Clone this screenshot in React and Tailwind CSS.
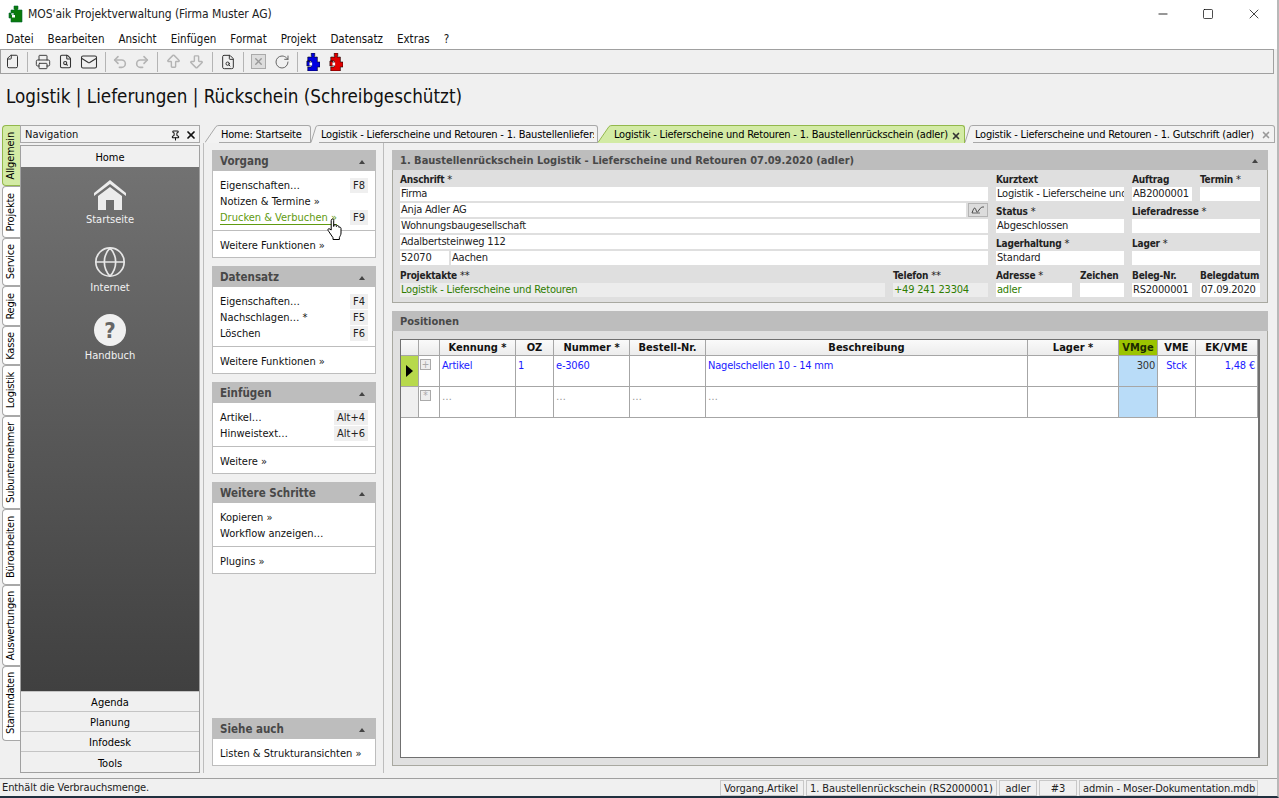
import { File, Printer, FileSearch, Mail, Undo2, Redo2, ArrowBigUp, ArrowBigDown, RotateCw, Globe, Pin, X, Minus, Square } from "lucide-react";

const font = "font-['DejaVu_Sans_Condensed','DejaVu_Sans',sans-serif]";

function Puzzle({ color, size = 14 }) {
  return (
    <svg width={size} height="18" viewBox="0 0 16 18" preserveAspectRatio="none">
      <path d="M6 0h4v3l-1 1h4v5h3v5h-3v4H2v-4h4v-1.5H4V13H1V8h3v1.5h2V8H2V4h5L6 3z" fill={color} stroke="#000" strokeWidth="0.6" />
      <rect x="4" y="9.5" width="3" height="3" fill="#fff" />
    </svg>
  );
}

function Sep() {
  return <div className="w-px h-[20px] bg-[#b4b4b4] mx-[7px]" />;
}

function Toolbar() {
  return (
    <div className="h-[25px] mr-[3px] border border-[#a0a0a0] bg-[#f0f0f0] flex items-center pl-[4px] text-[#333]">
      <File size={15} strokeWidth={1.6} className="-scale-x-100 w-[15px]" />
      <Sep />
      <Printer size={16} strokeWidth={1.4} />
      <FileSearch size={15} strokeWidth={1.7} className="ml-[7px]" />
      <Mail size={18} strokeWidth={1.4} className="ml-[7px]" />
      <Sep />
      <Undo2 size={16} strokeWidth={2.4} className="text-[#b4b4b4] -ml-[1px]" />
      <Redo2 size={16} strokeWidth={2.4} className="text-[#b4b4b4] ml-[6px]" />
      <Sep />
      <ArrowBigUp size={17} strokeWidth={2} className="text-[#b4b4b4]" />
      <ArrowBigDown size={17} strokeWidth={2} className="text-[#b4b4b4] ml-[6px]" />
      <Sep />
      <FileSearch size={16} strokeWidth={1.5} />
      <Sep />
      <div className="w-[15px] h-[15px] border border-[#aaa] bg-[#ddd] flex items-center justify-center">
        <X size={11} strokeWidth={3} className="text-[#999]" />
      </div>
      <RotateCw size={16} strokeWidth={1.5} className="ml-[8px] text-[#666]" />
      <Sep />
      <div className="ml-[1px]"><Puzzle color="#0000e0" /></div>
      <div className="ml-[9px]"><Puzzle color="#e00000" /></div>
    </div>
  );
}

const sideTabs = [
  ["Allgemein", 61],
  ["Projekte", 52],
  ["Service", 48],
  ["Regie", 40],
  ["Kasse", 39],
  ["Logistik", 51],
  ["Subunternehmer", 93],
  ["Büroarbeiten", 76],
  ["Auswertungen", 81],
  ["Stammdaten", 75],
];

function SideTabs() {
  return (
    <div className="w-[20px] pl-[2px] flex flex-col">
      {sideTabs.map(([name, h], i) => (
        <div
          key={name}
          style={{ height: h }}
          className={
            "border border-r-0 rounded-l-[4px] flex items-center justify-center text-[11px] tracking-[-0.2px] text-black " +
            (i === 0 ? "bg-[#d3eba5] border-[#93b84c]" : "bg-white border-[#a8a8a8]")
          }
        >
          <span className="[writing-mode:vertical-rl] rotate-180 whitespace-nowrap">{name}</span>
        </div>
      ))}
    </div>
  );
}

function NavBtn({ children }) {
  return <div className="h-[20px] pt-[4px] border-b border-[#c4c4c4] last:border-b-0 bg-[#f0f0f0] flex items-center justify-center text-[11px] text-black">{children}</div>;
}

function NavItem({ icon, label }) {
  return (
    <div className="h-[68px] flex flex-col items-center text-[11px] text-[#f2f2f2]">
      <div className="h-[36px] flex items-center">{icon}</div>
      <div className="leading-[14px] pt-px">{label}</div>
    </div>
  );
}

function Navigation() {
  return (
    <div className="w-[180px] flex flex-col">
      <div className="h-[18px] pt-[2px] border border-[#a8a8a8] bg-[#f2f2f2] flex items-center pl-[4px] pr-[2px] text-[11px] text-[#111]">
        <span className="flex-1">Navigation</span>
        <Pin size={11} strokeWidth={2.2} className="mr-[4px]" />
        <X size={12} strokeWidth={3.5} />
      </div>
      <div className="mt-[2px] mb-[5px] flex-1 border border-[#a0a0a0] flex flex-col">
        <div className="h-[21px] pt-[4px] bg-[#f0f0f0] flex items-center justify-center text-[11px] text-black">Home</div>
        <div className="flex-1 bg-gradient-to-b from-[#727272] to-[#404040] pt-[9px]">
          <NavItem
            label="Startseite"
            icon={
              <svg width="34" height="31" viewBox="0 0 34 31">
                <path d="M1 14L17 1l16 13v3L17 5 1 17z" fill="#ececec" />
                <path d="M5 17L17 8l12 9v14h-8V21h-8v10H5z" fill="#ececec" />
              </svg>
            }
          />
          <NavItem label="Internet" icon={<Globe size={34} strokeWidth={1.2} className="text-[#e6e6e6]" />} />
          <NavItem
            label="Handbuch"
            icon={
              <div className="w-[32px] h-[32px] rounded-full bg-[#f0f0f0] flex items-center justify-center text-[22px] font-bold text-[#666]">?</div>
            }
          />
        </div>
        <div className="border-t border-[#c4c4c4]">
          <NavBtn>Agenda</NavBtn>
          <NavBtn>Planung</NavBtn>
          <NavBtn>Infodesk</NavBtn>
          <NavBtn>Tools</NavBtn>
        </div>
      </div>
    </div>
  );
}

function Slant({ w = 14, fill = "#f0f0f0", stroke = "#a8a8a8" }) {
  return (
    <svg width={w} height="18" viewBox={`0 0 ${w} 18`} className="shrink-0">
      <path d={`M0 18L${w - 3} 1.5Q${w - 2} 0.5 ${w} 0.5V18z`} fill={fill} />
      <path d={`M0 17.5L${w - 3} 1.5Q${w - 2} 0.5 ${w} 0.5`} fill="none" stroke={stroke} />
    </svg>
  );
}

function Tab({ w, text, slant = 14, active, close, closeColor }) {
  return (
    <div style={{ width: w }} className="flex h-[18px] shrink-0">
      <Slant w={slant} fill={active ? "#d3eba5" : "#f2f2f2"} stroke={active ? "#93b84c" : "#a8a8a8"} />
      <div
        className={
          "flex-1 min-w-0 h-[18px] pt-[2px] flex items-center border-t text-[11px] tracking-[-0.2px] text-black pl-[2px] pr-[3px] rounded-tr-[3px] " +
          (active ? "bg-[#d3eba5] border-t-[#93b84c] border-r border-r-[#93b84c]" : "border-t-[#a8a8a8] border-b border-b-[#a8a8a8] border-r border-r-[#a8a8a8] bg-[#f2f2f2]")
        }
      >
        <span className="flex-1 overflow-hidden whitespace-nowrap">{text}</span>
        {close && <X size={10} strokeWidth={4} style={{ color: closeColor }} className="ml-[2px] shrink-0" />}
      </div>
    </div>
  );
}

function TabStrip() {
  return (
    <div className="h-[18px] flex pl-[5px]">
      <Tab w={106} text="Home: Startseite" />
      <Tab w={287} slant={8} text="Logistik - Lieferscheine und Retouren - 1. Baustellenliefers" />
      <Tab w={367} active text="Logistik - Lieferscheine und Retouren - 1. Baustellenrückschein (adler)" close closeColor="#333" />
      <Tab w={310} slant={8} text="Logistik - Lieferscheine und Retouren - 1. Gutschrift (adler)" close closeColor="#999" />
    </div>
  );
}

function Caret() {
  return <div className="w-0 h-0 border-x-[3px] border-x-transparent border-b-[4px] border-b-[#444]" />;
}

function Card({ title, children }) {
  return (
    <div className="border-x border-b border-[#bdbdbd] bg-white">
      <div className="h-[21px] pt-[2px] -mx-px bg-[#bdbdbd] flex items-center justify-between pl-[8px] pr-[11px] text-[11.5px] font-bold text-[#484848]">
        {title}
        <Caret />
      </div>
      {children}
    </div>
  );
}

function Row({ children, k, cls = "" }) {
  return (
    <div className={"h-[16px] flex items-center justify-between pl-[7px] pr-[7px] text-[11px] text-[#111] " + cls}>
      <span className="pt-[2px]">{children}</span>
      {k && <span className="bg-[#efefef] px-[3px] h-[15px] leading-[15px] text-[#222]">{k}</span>}
    </div>
  );
}

function Group({ children, last }) {
  return <div className={"pt-[6px] " + (last ? "pb-[4px]" : "pb-[5px] border-b border-[#bdbdbd]")}>{children}</div>;
}

function TaskPane() {
  return (
    <div className="w-[180px] border-r border-[#bdbdbd] flex flex-col gap-[8px] pt-[7px] pb-[7px] pl-[8px] pr-[7px]">
      <Card title="Vorgang">
        <Group>
          <Row k="F8">Eigenschaften…</Row>
          <Row>Notizen &amp; Termine »</Row>
          <div className="h-[16px] flex items-center justify-between pl-[7px] pr-[7px] text-[11px]">
            <span className="text-[#5f9a10] border-b border-[#5f9a10] h-[15px] leading-[15px]">Drucken &amp; Verbuchen »</span>
            <span className="bg-[#efefef] px-[3px] h-[15px] leading-[15px] text-[#222]">F9</span>
          </div>
        </Group>
        <Group last>
          <Row>Weitere Funktionen »</Row>
        </Group>
      </Card>
      <Card title="Datensatz">
        <Group>
          <Row k="F4">Eigenschaften…</Row>
          <Row k="F5">Nachschlagen… *</Row>
          <Row k="F6">Löschen</Row>
        </Group>
        <Group last>
          <Row>Weitere Funktionen »</Row>
        </Group>
      </Card>
      <Card title="Einfügen">
        <Group>
          <Row k="Alt+4">Artikel…</Row>
          <Row k="Alt+6">Hinweistext…</Row>
        </Group>
        <Group last>
          <Row>Weitere »</Row>
        </Group>
      </Card>
      <Card title="Weitere Schritte">
        <Group>
          <Row>Kopieren »</Row>
          <Row>Workflow anzeigen…</Row>
        </Group>
        <Group last>
          <Row>Plugins »</Row>
        </Group>
      </Card>
      <div className="mt-auto">
        <Card title="Siehe auch">
          <Group last>
            <Row>Listen &amp; Strukturansichten »</Row>
          </Group>
        </Card>
      </div>
    </div>
  );
}

function Label({ children }) {
  const [, name, stars] = String(children).match(/^(.*?)( \*+)?$/);
  return (
    <div className="h-[14px] leading-[17px] text-[10px] tracking-[-0.2px] font-bold text-[#222] whitespace-nowrap">
      {name}
      {stars && <span className="font-normal text-[11px]">{stars}</span>}
    </div>
  );
}

function Field({ children, cls = "", w }) {
  return (
    <div style={w ? { width: w } : undefined} className={"h-[14px] leading-[14px] pl-px bg-white text-[11px] tracking-[-0.2px] text-[#222] overflow-hidden whitespace-nowrap " + cls}>
      {children}
    </div>
  );
}

function LF({ label, value, w, cls }) {
  return (
    <div style={{ width: w }} className="flex flex-col gap-[2px] shrink-0">
      <Label>{label}</Label>
      <Field cls={cls}>{value}</Field>
    </div>
  );
}

function FormPanel() {
  return (
    <div className="border border-[#a8a8a0] bg-[#dfdfdf]">
      <div className="h-[20px] pt-[2px] -mx-px -mt-px bg-[#bdbdbd] flex items-center justify-between pl-[8px] pr-[10px] text-[11px] font-bold text-[#484848]">
        1. Baustellenrückschein Logistik - Lieferscheine und Retouren 07.09.2020 (adler)
        <Caret />
      </div>
      <div className="flex gap-[8px] pl-[7px] pr-[6px] pt-[1px] pb-[5px]">
        <div className="w-[588px] flex flex-col gap-[2px]">
          <Label>Anschrift *</Label>
          <Field>Firma</Field>
          <div className="flex gap-[2px]">
            <Field cls="flex-1">Anja Adler AG</Field>
            <div className="w-[20px] h-[14px] bg-[#dcdcdc] border border-[#b4b4b4] flex items-center justify-center">
              <svg width="14" height="8" viewBox="0 0 14 8">
                <path d="M1 7C3 1 4 1 5 4s1 3 3 0 3-3 5-3" fill="none" stroke="#444" strokeWidth="1" />
                <path d="M1 7h8" stroke="#444" strokeWidth="0.8" />
              </svg>
            </div>
          </div>
          <Field>Wohnungsbaugesellschaft</Field>
          <Field>Adalbertsteinweg 112</Field>
          <div className="flex gap-[2px]">
            <Field w={49}>52070</Field>
            <Field cls="flex-1">Aachen</Field>
          </div>
          <div className="flex gap-[8px]">
            <LF label="Projektakte **" value="Logistik - Lieferscheine und Retouren" w={485} cls="!bg-[#ececec] !text-[#2f7d00]" />
            <LF label="Telefon **" value="+49 241 23304" w={95} cls="!bg-[#ececec] !text-[#2f7d00]" />
          </div>
        </div>
        <div className="w-[128px] flex flex-col gap-[2px]">
          <Label>Kurztext</Label>
          <Field>Logistik - Lieferscheine und</Field>
          <Label>Status *</Label>
          <Field>Abgeschlossen</Field>
          <Label>Lagerhaltung *</Label>
          <Field>Standard</Field>
          <div className="flex gap-[8px]">
            <LF label="Adresse *" value="adler" w={76} cls="!text-[#2f7d00]" />
            <LF label="Zeichen" value="" w={44} />
          </div>
        </div>
        <div className="w-[128px] flex flex-col gap-[2px]">
          <div className="flex gap-[8px]">
            <LF label="Auftrag" value="AB2000001" w={60} />
            <LF label="Termin *" value="" w={60} />
          </div>
          <Label>Lieferadresse *</Label>
          <Field />
          <Label>Lager *</Label>
          <Field />
          <div className="flex gap-[8px]">
            <LF label="Beleg-Nr." value="RS2000001" w={60} />
            <LF label="Belegdatum" value="07.09.2020" w={60} />
          </div>
        </div>
      </div>
    </div>
  );
}

const heads = ["", "", "Kennung *", "OZ", "Nummer *", "Bestell-Nr.", "Beschreibung", "Lager *", "VMge", "VME", "EK/VME"];

function Cell({ children, cls = "" }) {
  return <div className={"border-r border-b border-[#a6a6a6] overflow-hidden whitespace-nowrap text-[11px] tracking-[-0.2px] px-[2px] pt-[2px] " + cls}>{children}</div>;
}

function ExpandBox({ mark }) {
  return (
    <div className="w-[11px] h-[11px] ml-[1px] mt-[3px] border border-[#aaa] bg-[#eee] text-[#aaa] flex items-center justify-center text-[10px] leading-none">{mark}</div>
  );
}

function Grid() {
  const blue = "text-[#1a1aff]";
  const dots = "text-[#999]";
  return (
    <div className="flex-1 bg-white border-l border-t border-r-2 border-b border-[#707070] min-h-0">
      <div className="grid grid-cols-[18px_21px_76px_38px_76px_76px_322px_91px_39px_38px_62px] grid-rows-[16px_31px_31px]">
        {heads.map((h, i) => (
          <div
            key={i}
            className={
              "border-r border-b border-[#a6a6a6] pt-[2px] flex items-center justify-center text-[11px] font-bold " +
              (i === 8 ? "bg-[#9bc400] text-[#1c2a00]" : "bg-gradient-to-b from-[#fafafa] to-[#ececec] text-[#111]")
            }
          >
            {h}
          </div>
        ))}
        <div className="border-r border-b border-[#a6a6a6] bg-[#b7d94c] flex items-center justify-center">
          <div className="w-0 h-0 border-y-[6px] border-y-transparent border-l-[7px] border-l-black" />
        </div>
        <Cell cls="!p-0"><ExpandBox mark="+" /></Cell>
        <Cell cls={blue}>Artikel</Cell>
        <Cell cls={blue}>1</Cell>
        <Cell cls={blue}>e-3060</Cell>
        <Cell />
        <Cell cls={blue}>Nagelschellen 10 - 14 mm</Cell>
        <Cell />
        <Cell cls="bg-[#b9dcf8] text-right text-[#333]">300</Cell>
        <Cell cls={blue + " text-center"}>Stck</Cell>
        <Cell cls={blue + " text-right"}>1,48 €</Cell>

        <div className="border-r border-b border-[#a6a6a6] bg-[#efefef]" />
        <Cell cls="!p-0"><ExpandBox mark="*" /></Cell>
        <Cell cls={dots}>…</Cell>
        <Cell />
        <Cell cls={dots}>…</Cell>
        <Cell cls={dots}>…</Cell>
        <Cell cls={dots}>…</Cell>
        <Cell />
        <Cell cls="bg-[#b9dcf8]" />
        <Cell />
        <Cell />
      </div>
    </div>
  );
}

function PositionsPanel() {
  return (
    <div className="flex-1 min-h-0 border border-[#a8a8a0] bg-[#e0e0e0] flex flex-col">
      <div className="h-[20px] pt-[2px] -mx-px -mt-px bg-[#bdbdbd] flex items-center pl-[8px] text-[11px] font-bold text-[#484848]">Positionen</div>
      <div className="flex-1 min-h-0 flex flex-col pl-[7px] pr-[7px] pt-[8px] pb-[7px]">
        <Grid />
      </div>
    </div>
  );
}

function Hand() {
  return (
    <svg width="16" height="22" viewBox="0 0 16 22" className="absolute left-[327px] top-[218px]">
      <path
        d="M4.5 1.5c1 -1 2.2 -.5 2.2 1v6l.3-1.5c.8-.8 2-.6 2.2.5l.2 1 .3-.6c.8-.7 1.9-.4 2.1.7l.1.8c.7-.6 2-.2 2.1 1v4.6c0 2-1 3-1.6 4.5v2H6v-1.8L1.6 13.2C.6 12 .8 10.8 2 10.6l2.2 1.4V2.5z"
        fill="#fff"
        stroke="#000"
        strokeWidth="1"
      />
    </svg>
  );
}

function Status({ children, w, cls = "" }) {
  return <div style={{ width: w }} className={"border border-[#c8c8c8] h-[16px] leading-[15px] px-[3px] overflow-hidden whitespace-nowrap shrink-0 " + cls}>{children}</div>;
}

export default function App() {
  const menu = ["Datei", "Bearbeiten", "Ansicht", "Einfügen", "Format", "Projekt", "Datensatz", "Extras", "?"];
  return (
    <div className={"relative w-[1279px] h-[798px] overflow-hidden flex flex-col bg-[#f0f0f0] border-r-2 border-b-2 border-r-[#b8b8b8] border-b-[#20303f] " + font}>
      <div className="bg-white">
        <div className="h-[30px] pb-[2px] flex items-center pl-[8px] text-[12px] tracking-[-0.05px] text-[#222]">
          <svg width="16" height="18" viewBox="0 0 16 18" className="mr-[4px]">
            <path d="M6 1h4v3l-1 1h5v12H3v-4H1V8h2v2h3V8H3V5h4L6 4z" fill="#0a7a0a" stroke="#063" strokeWidth="0.6" />
            <rect x="4" y="10" width="3" height="2.5" fill="#fff" />
          </svg>
          <span className="flex-1">MOS'aik Projektverwaltung (Firma Muster AG)</span>
          <Minus size={14} strokeWidth={1.4} className="mr-[32px] text-black" />
          <Square size={12} strokeWidth={1.4} className="mr-[32px] text-black" />
          <X size={16} strokeWidth={1.1} className="mr-[15px] text-black" />
        </div>
        <div className="h-[19px] flex items-center gap-[14px] pl-[6px] text-[11.5px] text-[#111]">
          {menu.map((m) => (
            <span key={m}>{m}</span>
          ))}
        </div>
      </div>
      <Toolbar />
      <div className="h-[51px] pb-[4px] flex items-center pl-[6px] text-[18.7px] text-[#111]">Logistik | Lieferungen | Rückschein (Schreibgeschützt)</div>
      <div className="flex-1 min-h-0 flex">
        <SideTabs />
        <Navigation />
        <div className="flex-1 min-w-0 flex flex-col">
          <TabStrip />
          <div className="flex-1 min-h-0 flex ml-[3px] mb-[5px] border-l border-[#bdbdbd]">
            <TaskPane />
            <div className="flex-1 min-w-0 flex flex-col gap-[8px] pl-[8px] pr-[9px] pt-[7px] pb-[7px]">
              <FormPanel />
              <PositionsPanel />
            </div>
          </div>
        </div>
      </div>
      <div className="h-[18px] pt-[1px] border-t border-[#a0a0a0] flex items-center pl-[2px] pr-[19px] text-[11px] tracking-[-0.1px] text-[#222]">
        <span className="flex-1">Enthält die Verbrauchsmenge.</span>
        <div className="flex gap-[2px]">
          <Status w={84}>Vorgang.Artikel</Status>
          <Status w={191}>1. Baustellenrückschein (RS2000001)</Status>
          <Status w={38} cls="text-center">adler</Status>
          <Status w={38} cls="text-center">#3</Status>
          <Status w={179}>admin - Moser-Dokumentation.mdb</Status>
        </div>
      </div>
      <div className="absolute top-0 right-[-2px] w-[2px] h-[120px] bg-[#1d3a5c]" />
      <Hand />
    </div>
  );
}
